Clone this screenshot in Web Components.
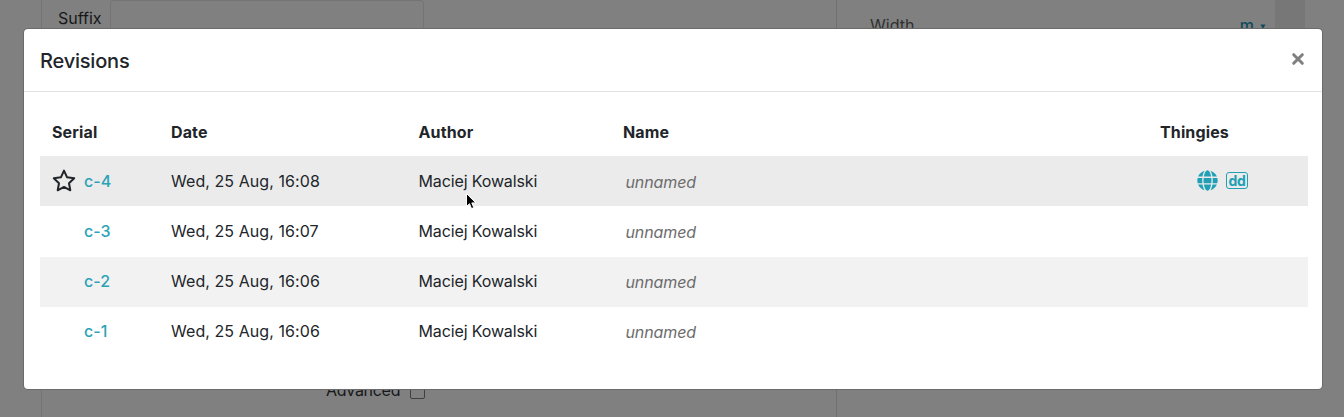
<!DOCTYPE html>
<html lang="en">
<head>
<meta charset="utf-8">
<title>Revisions</title>
<style>
html,body{margin:0;height:417px;overflow:hidden;background:#808080}
body{font-family:Inter,"Liberation Sans",sans-serif;font-size:16px;color:#212529}
</style>
</head>
<body>
<revisions-app></revisions-app>
<script>
class BaseElement extends HTMLElement{
  connectedCallback(){
    if(this.shadowRoot)return;
    this.attachShadow({mode:'open'}).innerHTML=this.render();
  }
}
customElements.define('form-backdrop',class extends BaseElement{
  render(){return `<style>
:host{display:grid;grid-template-columns:41px 796px 1fr;height:417px;color:#161819;font-size:16px;line-height:20px}
.main{border-left:1px solid #747474;border-right:1px solid #707070;display:flex;flex-direction:column;justify-content:space-between}
.field{display:flex;height:29px}
.suffix{width:68px;padding:8px 0 0 16px;box-sizing:border-box}
.input{width:314px;box-sizing:border-box;border:1px solid #747474;border-bottom:0;border-radius:4px 4px 0 0}
.adv{display:flex;height:37px;padding-left:284px;align-items:flex-start}
.adv span{width:84px;letter-spacing:-.3px}
.box{width:15px;height:15px;box-sizing:border-box;border:1.5px solid #3f3f3f;border-radius:2px;margin-top:4px}
.side{display:flex;height:36px}
.row{width:438px;box-sizing:border-box;padding:15px 9px 0 33px;display:flex;justify-content:space-between;color:#303132}
.unit{color:#104a5c;font-weight:500;display:flex;align-items:center;gap:6px;height:20px}
svg{display:block;margin-top:3px}
.bar{width:30px;background:#777}
</style>
<div></div>
<div class="main"><div class="field"><div class="suffix">Suffix</div><div class="input"></div></div>
<div class="adv"><span>Advanced</span><div class="box"></div></div></div>
<div class="side"><div class="row"><span>Width</span><span class="unit">m<svg width="6" height="6"><path d="M.5 .5h5L3 5z" fill="#104a5c"/></svg></span></div><div class="bar"></div></div>`}
});
customElements.define('icon-star',class extends BaseElement{
  render(){return `<style>:host{display:block}svg{display:block}</style><svg width="24" height="24" viewBox="0 0 24 24"><path d="M12 1.600l3.100 6.700 7.100.900-5.200 5 1.300 7.100-6.300-3.400-6.300 3.400 1.300-7.100L1.800 9.200l7.100-.900z" fill="none" stroke="#212529" stroke-width="2" stroke-linejoin="round"/></svg>`}
});
customElements.define('icon-globe',class extends BaseElement{
  render(){return `<style>:host{display:block}svg{display:block}</style><svg width="21" height="21" viewBox="0 0 496 512"><path fill="#21a0b5" d="M336.500 160C322 70.700 287.800 8 248 8s-74 62.700-88.500 152h177zM152 256c0 22.200 1.200 43.500 3.300 64h185.300c2.100-20.500 3.300-41.800 3.300-64s-1.200-43.500-3.300-64H155.300c-2.100 20.500-3.300 41.800-3.300 64zm324.700-96c-28.600-67.900-86.500-120.400-158-141.600 24.400 33.800 41.200 84.700 50 141.600h108zM177.200 18.400C105.800 39.600 47.800 92.100 19.300 160h108c8.700-56.900 25.500-107.800 49.900-141.600zM487.400 192H372.700c2.100 21 3.300 42.500 3.300 64s-1.200 43-3.300 64h114.600c5.500-20.500 8.600-41.800 8.600-64s-3.100-43.500-8.500-64zM120 256c0-21.500 1.200-43 3.300-64H8.600C3.200 212.500 0 233.800 0 256s3.200 43.500 8.600 64h114.600c-2-21-3.200-42.500-3.200-64zm39.500 96c14.500 89.300 48.700 152 88.500 152s74-62.700 88.500-152h-177zm159.300 141.600c71.400-21.200 129.400-73.700 158-141.600h-108c-8.800 56.900-25.600 107.800-50 141.600zM19.300 352c28.600 67.900 86.500 120.400 158 141.600-24.400-33.800-41.200-84.700-50-141.600h-108z"/></svg>`}
});
customElements.define('dd-badge',class extends BaseElement{
  render(){return `<style>:host{display:flex;box-sizing:border-box;width:22px;height:17px;border:1px solid #21a0b5;border-radius:3px;color:#21a0b5;font:700 14px/15px Inter,"Liberation Sans",sans-serif;justify-content:center;letter-spacing:-.4px}</style>dd`}
});
customElements.define('revision-row',class extends BaseElement{
  render(){
    const cur=this.hasAttribute('current');
    return `<style>
:host{display:grid;grid-template-columns:119px 247.500px 204.500px 1fr 148px;align-items:center;height:50.200px;padding:0 0 1.200px 12px;box-sizing:border-box;background:var(--row-bg,transparent);white-space:nowrap;line-height:24px}
.serial{display:flex;align-items:center;color:#2ba3b7;font-weight:500}
.mark{width:32px;height:24px}
.name{font-style:italic;color:#6c6c6c;padding:2px 0 0 2.500px;letter-spacing:-.12px}
.date{letter-spacing:.07px}
.author{letter-spacing:-.13px}
.icons{display:flex;gap:8px;align-items:center;padding-left:37px;margin-top:-1px}
</style>
<div class="serial"><div class="mark">${cur?'<icon-star></icon-star>':''}</div><slot name="serial"></slot></div>
<div class="date"><slot name="date"></slot></div>
<div class="author"><slot name="author"></slot></div>
<div class="name">unnamed</div>
<div class="icons">${cur?'<icon-globe></icon-globe><dd-badge></dd-badge>':''}</div>`}
});
customElements.define('revision-table',class extends BaseElement{
  render(){
    const rows=[['c-4','16:08','#ebebeb'],['c-3','16:07','transparent'],['c-2','16:06','#f2f2f2'],['c-1','16:06','transparent']];
    return `<style>
:host{display:block}
.head{display:grid;grid-template-columns:119px 247.500px 204.500px 1fr 148px;padding-left:12px;height:64.300px;padding-top:28px;box-sizing:border-box;font-weight:700;line-height:24px;letter-spacing:.13px}
</style>
<div class="head"><div>Serial</div><div>Date</div><div>Author</div><div>Name</div><div>Thingies</div></div>
${rows.map(([s,t,c],i)=>`<revision-row ${i?'':'current'} style="--row-bg:${c}"><span slot="serial">${s}</span><span slot="date">Wed, 25 Aug, ${t}</span><span slot="author">Maciej Kowalski</span></revision-row>`).join('')}`}
});
customElements.define('modal-dialog',class extends BaseElement{
  render(){return `<style>
:host{display:block;box-sizing:border-box;width:1298px;height:360px;background:#fff;border-radius:4px;box-shadow:0 0 0 1px #6b6b6b}
header{display:flex;justify-content:space-between;align-items:center;height:63px;box-sizing:border-box;border-bottom:1px solid #e2e2e2;padding:0 17px 0 16px}
h2{margin:1px 0 0;font-size:20px;font-weight:500;line-height:30px;letter-spacing:-.2px;padding-top:1px}
button{border:0;background:none;padding:0;margin-top:-3px}
svg{display:block}
section{padding:0 14px 0 16px}
</style>
<header><h2><slot name="title"></slot></h2><button aria-label="Close"><svg width="14" height="14" viewBox="0 0 14 14"><path d="M2.700 2.700l8.600 8.600M11.300 2.700l-8.600 8.600" stroke="#7f7f7f" stroke-width="3" stroke-linecap="round"/></svg></button></header>
<section><slot></slot></section>`}
});
customElements.define('revisions-app',class extends BaseElement{
  render(){return `<style>
:host{display:block;position:relative;height:417px;overflow:hidden}
modal-dialog{position:absolute;left:24px;top:29px}
.cursor{position:absolute;left:465px;top:192px}
</style>
<form-backdrop></form-backdrop>
<modal-dialog><span slot="title">Revisions</span><revision-table></revision-table></modal-dialog>
<svg class="cursor" width="13" height="19" viewBox="0 0 13 19"><path d="M1.500 1.500v13l3-2.800 2 4.900 2.300-1-2-4.700h4z" fill="#000" stroke="#fff" stroke-width="1"/></svg>`}
});
</script>
</body>
</html>
